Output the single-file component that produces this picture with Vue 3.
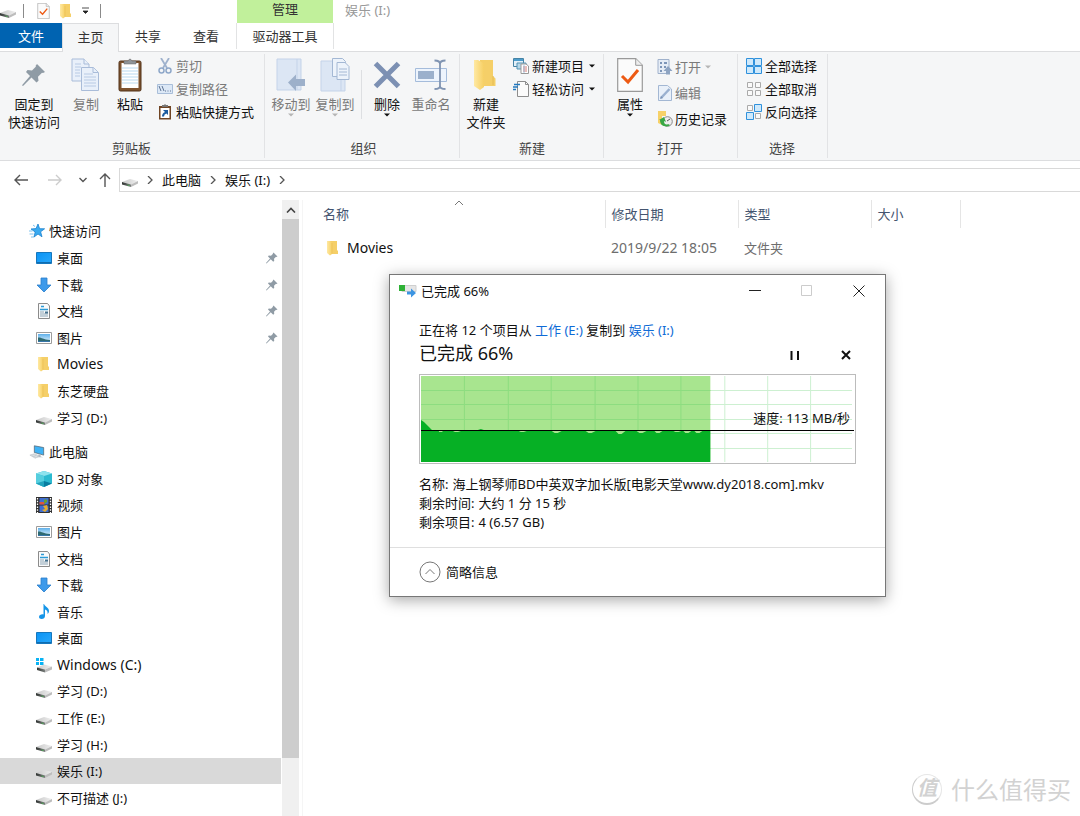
<script setup>
const quickAccess = [
  { icon: 'star', label: '快速访问', root: true },
  { icon: 'desktop', label: '桌面', pinned: true },
  { icon: 'download', label: '下载', pinned: true },
  { icon: 'document', label: '文档', pinned: true },
  { icon: 'picture', label: '图片', pinned: true },
  { icon: 'folder', label: 'Movies', latin: true },
  { icon: 'folder', label: '东芝硬盘' },
  { icon: 'drive', label: '学习 (D:)' }
]

const thisPc = [
  { icon: 'pc', label: '此电脑', root: true },
  { icon: 'cube', label: '3D 对象' },
  { icon: 'video', label: '视频' },
  { icon: 'picture', label: '图片' },
  { icon: 'document', label: '文档' },
  { icon: 'download', label: '下载' },
  { icon: 'music', label: '音乐' },
  { icon: 'desktop', label: '桌面' },
  { icon: 'windrive', label: 'Windows (C:)', latin: true },
  { icon: 'drive', label: '学习 (D:)' },
  { icon: 'drive', label: '工作 (E:)' },
  { icon: 'drive', label: '学习 (H:)' },
  { icon: 'drive', label: '娱乐 (I:)', selected: true },
  { icon: 'drive', label: '不可描述 (J:)' }
]

const sections = [
  { id: 'quick', items: quickAccess },
  { id: 'pc', items: thisPc }
]

const gridX = [43, 87, 130, 174, 217, 260, 304, 347, 390]
const gridY = [15, 29, 44, 58, 73]
const progress = 290

// Short drops in transfer speed: centre, half width and depth
const dips = [
  [20, 2, 1], [36, 4, 1], [102, 4, 1], [136, 5, 2], [170, 5, 2], [200, 5, 3], [221, 5, 2],
  [238, 4, 2], [257, 4, 1], [267, 4, 2], [278, 4, 2]
]
</script>

<template>
  <svg class="sprite" aria-hidden="true">
    <defs>
      <linearGradient id="gFolder" x1="0" x2="1"><stop offset="0" stop-color="#ffe9a3" /><stop offset="1" stop-color="#f6cf63" /></linearGradient>
      <linearGradient id="gDrive" x1="0" x2="1"><stop offset="0" stop-color="#c9c9c9" /><stop offset="1" stop-color="#efefef" /></linearGradient>
      <linearGradient id="gFront" x1="0" x2="1"><stop offset="0" stop-color="#303432" /><stop offset="1" stop-color="#7c807e" /></linearGradient>
      <linearGradient id="gSky" x1="0" y1="0" x2="0" y2="1"><stop offset="0" stop-color="#5fb0ea" /><stop offset="1" stop-color="#e6f5fc" /></linearGradient>
      <linearGradient id="gScreen" x1="0" y1="0" x2="1" y2="1"><stop offset="0" stop-color="#0a93f5" /><stop offset="1" stop-color="#2aa9fb" /></linearGradient>
    </defs>
    <symbol id="drive" viewBox="0 0 16 16">
      <path d="M0 10 8 7l8 2-7 3.500z" fill="url(#gDrive)" />
      <path d="M0 10 9 12.500V15L0 12.400z" fill="url(#gFront)" />
      <path d="M9 12.500 16 9v2.500L9 15z" fill="#bdbdbd" />
      <path d="M5.500 12.500 7.500 13v1l-2-.5z" fill="#4fae57" />
    </symbol>
    <symbol id="windrive" viewBox="0 0 16 16">
      <path d="M1 10.500 8 7.500l8 2-7 3z" fill="url(#gDrive)" />
      <path d="M1 10.500 9 12.500V15.500L1 13z" fill="url(#gFront)" />
      <path d="M9 12.500 16 9.500v3L9 15.500z" fill="#bdbdbd" />
      <path d="M0 1h3v3H0zM4 1h3.500v3H4zM0 5h3v3H0zM4 5h3.500v3H4z" fill="#08b3f4" />
    </symbol>
    <symbol id="folder" viewBox="0 0 16 16">
      <path d="M5 1h7v9l1 1v3H5z" fill="#f5cf68" />
      <path d="M2 1h3l2 1.500V14l-2 1.500L2 13z" fill="url(#gFolder)" />
      <path d="M7 3v10.500" stroke="#e7bd53" stroke-width=".6" />
    </symbol>
    <symbol id="bigfolder" viewBox="0 0 32 32">
      <path d="M10 1h13v16l2.500 2.500V27H10z" fill="#f5cf68" />
      <path d="M4 1h4l6 3.500V28l-4 3-6-4z" fill="url(#gFolder)" />
      <path d="M23 17v9" stroke="#dfb750" stroke-width=".8" />
    </symbol>
    <symbol id="pin" viewBox="0 0 24 24">
      <path d="M15 1 23 9l-2 1-1-.3-4 4 .5 4-2 1.800-5-5L1 23l-1-.8L8 13 4 9l1.500-2 4.500.6 4-4L13.500 3z" fill="#8f9ba5" />
    </symbol>
    <symbol id="star" viewBox="0 0 16 16">
      <path d="m9 1 1.600 4.700 5 .1-4 3 1.400 5L9 11l-4 3 1.200-5L2 6l5-.4z" fill="#39aaf0" stroke="#1b82cf" stroke-width=".8" />
      <path d="M0 8h3.500M.5 11h4M2 14h3M4 2l2 1.500" stroke="#7fc2ee" stroke-width="1" />
    </symbol>
    <symbol id="desktop" viewBox="0 0 16 16">
      <path d="M.5 2.500h15v11H.5z" fill="url(#gScreen)" stroke="#1677bd" />
      <path d="M1 12.500h14" stroke="#0f6cb0" />
    </symbol>
    <symbol id="download" viewBox="0 0 16 16">
      <path d="M5 1h6v7h4l-7 7-7-7h4z" fill="#3e9aea" stroke="#2a7ecb" stroke-width=".8" />
    </symbol>
    <symbol id="document" viewBox="0 0 16 16">
      <path d="M2.500.5h9l2 2.500v12.500h-11z" fill="#fafafa" stroke="#8b8b8b" />
      <path d="M5 3.500h3M4 6.500h8" stroke="#2b9ad7" stroke-width="1.400" /><path d="M4 9h4M4 11h8M4 13h8" stroke="#8ba4b5" />
      <path d="M9 8.500h3v2H9z" fill="#44718f" />
    </symbol>
    <symbol id="picture" viewBox="0 0 16 16">
      <path d="M.5 2.500h15v11H.5z" fill="#fff" stroke="#9c9c9c" />
      <path d="M2 4h12v8H2z" fill="url(#gSky)" /><path d="M2 7.500c3-.5 5 2 12 2.500v2H2z" fill="#2f6a72" /><path d="M2 11h12v1H2z" fill="#3776a9" />
    </symbol>
    <symbol id="pc" viewBox="0 0 18 16">
      <path d="m6 1 10.500 2v8.500L6 8.500z" fill="#3fb2f5" stroke="#54616c" stroke-width=".8" />
      <path d="m11 10.500 2 .5v2l3 1H9z" fill="#aeb7be" />
      <path d="M1 11.500 6 10l6 2.500-5 2.500z" fill="#e4e8eb" stroke="#b0b7bc" stroke-width=".6" />
      <path d="m3 12 5 2M5 11l5 2" stroke="#a2abb2" stroke-width=".5" />
    </symbol>
    <symbol id="cube" viewBox="0 0 16 16">
      <path d="m8 0 8 2.500v10L8 16 0 12.500v-10z" fill="#2cbad0" /><path d="m8 0 8 2.500L8 5 0 2.500z" fill="#8ee3ee" />
      <path d="M0 2.500 8 5v11l-8-3.500z" fill="#56cede" /><path d="m8 10 8 2.500L8 16z" fill="#087da0" /><path d="M0 12.500 8 10v6z" fill="#20a3bd" />
    </symbol>
    <symbol id="video" viewBox="0 0 16 16">
      <path d="M0 0h16v16H0z" fill="#303030" /><path d="M3.500 1h9v6.500h-9zM3.500 8.500h9V15h-9z" fill="#416fd1" />
      <path d="M3.500 5h5v2.500h-5z" fill="#df563a" /><path d="M8 3c2-2 4 0 3 2l-3 2z" fill="#6c9e2d" /><path d="m7 9 4-1 1 4-3 3-3-2 3-1z" fill="#e5ab2c" />
      <path d="M1.500 1v15M14.500 1v15" stroke="#fff" stroke-width="1.300" stroke-dasharray="1.500 1.300" />
    </symbol>
    <symbol id="music" viewBox="0 0 16 16">
      <path d="M8 0c1 3 5 3.500 5 7 0 2-1 2.500-1.500 3 .5-3-1-4-2.500-4.500V12c0 2-1.500 3-3.300 3C4 15 3 14.200 3 13c0-2 2.500-3 4.500-2.500V0z" fill="#1595e8" />
    </symbol>
    <symbol id="properties" viewBox="0 0 26 34">
      <path d="M.7.7h18l6.600 6.600v26H.7z" fill="#fbfbfb" stroke="#999" stroke-width="1.200" /><path d="M18.700.7v6.600h6.600" fill="#eee" stroke="#999" />
      <path d="m5 18 6 6 10-12" fill="none" stroke="#ed5a14" stroke-width="3" />
    </symbol>
    <symbol id="copy" viewBox="0 0 30 34">
      <g fill="#e9f0fa" stroke="#a9bcd9"><path d="M1 1h12l5 5v17H1z" /><path d="M13 1v5h5" /><path d="M10.500 9.500h12l5 5v18h-17z" /><path d="M22 9.500v5h5" /></g>
      <path d="M4 6h6M4 9h6M4 12h5M4 15h5M4 18h5M13 16h9M13 19h12M13 22h12M13 25h12M13 28h12" stroke="#b8cae4" />
    </symbol>
    <symbol id="paste" viewBox="0 0 24 34">
      <rect x="1" y="3" width="22" height="30" rx="1.500" fill="#7d532f" stroke="#523219" />
      <path d="M3.500 5h17v25h-17z" fill="#fff" /><path d="M4 10h16M4 13h16M4 16h16M4 19h16M4 22h16M4 25h16" stroke="#b9d9ef" />
      <path d="M6 3h4q2-4 4 0h4v3H6z" fill="#8f9498" stroke="#666" stroke-width=".5" />
    </symbol>
    <symbol id="cut" viewBox="0 0 16 16">
      <path d="m4 0 6 10M12 0 6 10" stroke="#9fb2cd" stroke-width="1.800" />
      <g fill="none" stroke="#8ea7c9" stroke-width="1.500"><ellipse cx="4.500" cy="12.500" rx="2.500" ry="2.500" /><ellipse cx="11.500" cy="12.500" rx="2.500" ry="2.500" /></g>
    </symbol>
    <symbol id="path" viewBox="0 0 16 16">
      <path d="M.5 3.500h15v9H.5z" fill="#dce8f6" stroke="#a9bed9" /><path d="m2 5 2 5M5 5l2 5" stroke="#5d7394" /><path d="M8 10h1M10.500 10h1M13 10h1" stroke="#5d7394" />
    </symbol>
    <symbol id="shortcut" viewBox="0 0 16 16">
      <path d="M2 2h12v13.500H2z" fill="#704524" /><path d="M3.500 4h9v10h-9z" fill="#fff" /><path d="M5 1h2l1-1 1 1h2v2H5z" fill="#777" />
      <path d="M6 6h5v5L9.500 9.500Q7 10 7 12.500H5Q5 9 8 8z" fill="#1c5b9f" />
    </symbol>
    <symbol id="moveto" viewBox="0 0 30 34">
      <path d="M1 1h24v31H1z" fill="#dce6f4" stroke="#c4d3e9" /><path d="M21 1v31" stroke="#c4d3e9" />
      <path d="m12 24.500 8-8V21h9v7h-9v5z" fill="#9db0ca" />
    </symbol>
    <symbol id="copyto" viewBox="0 0 30 34">
      <path d="M1 3h24v30H1z" fill="#dce6f4" stroke="#c4d3e9" /><path d="M21 3v30" stroke="#c4d3e9" />
      <g fill="#edf3fb" stroke="#a4b8d4"><path d="M12.500.5h10l3 3v15h-13z" /><path d="M17 4.500h8l4 4v13H17z" /></g>
      <path d="M19 11h8M19 14h8M19 17h8" stroke="#a4b8d4" />
    </symbol>
    <symbol id="delete" viewBox="0 0 28 34"><path d="M2.500 5.500 25.500 28.500M25.500 5.500 2.500 28.500" stroke="#7c90b3" stroke-width="5" /></symbol>
    <symbol id="rename" viewBox="0 0 32 34">
      <path d="M.5 10.500h31v13H.5z" fill="#edf4fd" stroke="#a5bcdb" /><path d="M3 13h16v8H3z" fill="#9bb0cc" />
      <path d="M19.500 2.500q5.500 0 5.500 3.500v22q0 3-5.500 3M30.500 2.500Q25 2.500 25 6M30.500 31Q25 31 25 28" fill="none" stroke="#8094b2" stroke-width="1.800" />
    </symbol>
    <symbol id="newitem" viewBox="0 0 16 16">
      <path d="M.5.500h10v8H.5z" fill="#e4f0f8" stroke="#4583a5" /><path d="M1 1h9v2H1z" fill="#4d9ccb" /><path d="M4 5h9v6H4z" fill="#b8d8e9" stroke="#5593b4" />
      <path d="M8 6h5l2.500 2v7.500H8z" fill="#fff" stroke="#999" /><path d="M10 9h4M10 11h4M10 13h4" stroke="#d77b74" /><path d="M11 7v8" stroke="#7bb2dc" stroke-width=".7" />
    </symbol>
    <symbol id="easy" viewBox="0 0 16 16">
      <path d="M4.500.5h8l3 3v12h-11z" fill="#fbfbfb" stroke="#8d8d8d" /><path d="M12.500.5v3h3" fill="none" stroke="#8d8d8d" />
      <path d="M1 3.500h6M0 6h5M0 8.500h3" stroke="#2379bf" stroke-width="1.400" />
    </symbol>
    <symbol id="open" viewBox="0 0 16 16">
      <path d="M1 .5h11v14H1z" fill="#e6edf6" stroke="#a0b2cc" /><path d="M3 3h2v2H3zM3 7h2v2H3zM3 11h2v2H3zM7 3h3v2H7zM7 7h2v2H7z" fill="#7e96b8" />
      <path d="m11 7 4.500 5H13v3.500H9V12H6.500z" fill="#8ea4c2" />
    </symbol>
    <symbol id="edit" viewBox="0 0 16 16">
      <path d="M1.500.5h9l4 3.500v11.500h-13z" fill="#e9f0f9" stroke="#a3b7d3" /><path d="M4 13 12.500 4" stroke="#9bb1d0" stroke-width="2.500" /><path d="m3 14 1-3 2 2z" fill="#7d94b5" />
    </symbol>
    <symbol id="history" viewBox="0 0 16 16">
      <path d="M1 0h8v5H5v9l-4-2z" fill="#f6d168" /><circle cx="10.500" cy="10.500" r="4.800" fill="#eee" stroke="#888" />
      <path d="M3 9c0 8 9 7 10 5l-2-1c-1 1-4 1-4-3l2 1-2-5-5 3z" fill="#38a745" /><path d="m10 10 3-2" stroke="#555" />
    </symbol>
    <symbol id="selectall" viewBox="0 0 16 16">
      <path d="M.5.5h7v7h-7zM8.500.5h7v7h-7zM.5 8.500h7v7h-7zM8.500 8.500h7v7h-7z" fill="#cfe9fb" stroke="#2f91dc" />
    </symbol>
    <symbol id="selectnone" viewBox="0 0 16 16">
      <path d="M1.500 1.500h5v5h-5zM9.500 1.500h5v5h-5zM1.500 9.500h5v5h-5zM9.500 9.500h5v5h-5z" fill="#fafafa" stroke="#aaa" />
    </symbol>
    <symbol id="invert" viewBox="0 0 16 16">
      <path d="M1.500 1.500h5v5h-5zM9.500 9.500h5v5h-5z" fill="#fafafa" stroke="#aaa" /><path d="M8.500.5h7v7h-7zM.5 8.500h7v7h-7z" fill="#cfe9fb" stroke="#2f91dc" />
    </symbol>
    <symbol id="copying" viewBox="0 0 18 14">
      <path d="M3 1.500h14v6H3z" fill="#e5e5e5" stroke="#cfcfcf" /><path d="M0 1h6v6H0z" fill="#2eb135" /><path d="M8 7.500h4V4.500L17 9l-5 4.500v-3H8z" fill="#3d95e2" />
    </symbol>
    <symbol id="caret" viewBox="0 0 6 4"><path d="M0 .5h6L3 3.500z" fill="currentColor" /></symbol>
    <symbol id="chevron" viewBox="0 0 8 8"><path d="m2 0 4 4-4 4" fill="none" stroke="currentColor" stroke-width="1.300" /></symbol>
  </svg>

  <div class="window">
    <header class="titlebar">
      <div class="quickbar">
        <svg class="i16"><use href="#drive" /></svg>
        <span class="bar"></span>
        <button class="plain q1" aria-label="属性"><svg class="qprop"><use href="#properties" /></svg></button>
        <button class="plain q2" aria-label="新建文件夹"><svg class="i16"><use href="#folder" /></svg></button>
        <button class="plain q3" aria-label="自定义快速访问工具栏"><svg class="qmore" viewBox="0 0 8 8"><path d="M0 1h7M1 4h5L3.500 6.500z" stroke="#222" fill="#222" stroke-width=".8" /></svg></button>
        <span class="bar"></span>
      </div>
      <div class="context-head">管理</div>
      <h1 class="window-title">娱乐 (I:)</h1>
    </header>

    <nav class="tabs">
      <button class="tab file">文件</button>
      <button class="tab active">主页</button>
      <button class="tab">共享</button>
      <button class="tab">查看</button>
      <button class="tab context">驱动器工具</button>
    </nav>

    <div class="ribbon">
      <section class="group roomy">
        <div class="tools">
          <button class="big wide"><svg class="pin-big"><use href="#pin" /></svg><span>固定到<br />快速访问</span></button>
          <button class="big dim"><svg class="ico"><use href="#copy" /></svg><span>复制</span></button>
          <button class="big"><svg class="ico"><use href="#paste" /></svg><span>粘贴</span></button>
          <div class="stack">
            <button class="small dim"><svg class="i16"><use href="#cut" /></svg>剪切</button>
            <button class="small dim"><svg class="i16"><use href="#path" /></svg>复制路径</button>
            <button class="small"><svg class="i16"><use href="#shortcut" /></svg>粘贴快捷方式</button>
          </div>
        </div>
        <h2>剪贴板</h2>
      </section>
      <section class="group tight">
        <div class="tools">
          <button class="big dim"><svg class="ico"><use href="#moveto" /></svg><span>移动到</span><svg class="caret"><use href="#caret" /></svg></button>
          <button class="big dim"><svg class="ico"><use href="#copyto" /></svg><span>复制到</span><svg class="caret"><use href="#caret" /></svg></button>
          <span class="rule"></span>
          <button class="big"><svg class="ico"><use href="#delete" /></svg><span>删除</span><svg class="caret"><use href="#caret" /></svg></button>
          <button class="big dim"><svg class="ico"><use href="#rename" /></svg><span>重命名</span></button>
        </div>
        <h2>组织</h2>
      </section>
      <section class="group">
        <div class="tools">
          <button class="big"><svg class="ico"><use href="#bigfolder" /></svg><span>新建<br />文件夹</span></button>
          <div class="stack">
            <button class="small"><svg class="i16"><use href="#newitem" /></svg>新建项目<svg class="caret"><use href="#caret" /></svg></button>
            <button class="small"><svg class="i16"><use href="#easy" /></svg>轻松访问<svg class="caret"><use href="#caret" /></svg></button>
          </div>
        </div>
        <h2>新建</h2>
      </section>
      <section class="group roomy">
        <div class="tools">
          <button class="big"><svg class="ico"><use href="#properties" /></svg><span>属性</span><svg class="caret"><use href="#caret" /></svg></button>
          <div class="stack loose">
            <button class="small dim"><svg class="i16"><use href="#open" /></svg>打开<svg class="caret"><use href="#caret" /></svg></button>
            <button class="small dim"><svg class="i16"><use href="#edit" /></svg>编辑</button>
            <button class="small"><svg class="i16"><use href="#history" /></svg>历史记录</button>
          </div>
        </div>
        <h2>打开</h2>
      </section>
      <section class="group roomy">
        <div class="tools">
          <div class="stack">
            <button class="small"><svg class="i16"><use href="#selectall" /></svg>全部选择</button>
            <button class="small"><svg class="i16"><use href="#selectnone" /></svg>全部取消</button>
            <button class="small"><svg class="i16"><use href="#invert" /></svg>反向选择</button>
          </div>
        </div>
        <h2>选择</h2>
      </section>
    </div>

    <div class="address-row">
      <div class="nav-buttons">
        <button class="plain" aria-label="后退"><svg class="arrow" viewBox="0 0 14 12"><path d="M14 6H1M6 1 1 6l5 5" /></svg></button>
        <button class="plain faint" aria-label="前进"><svg class="arrow" viewBox="0 0 14 12"><path d="M0 6h13M8 1l5 5-5 5" /></svg></button>
        <button class="plain narrow" aria-label="最近浏览的位置"><svg class="recent" viewBox="0 0 8 6"><path d="m.5 1 3.500 3.500L7.500 1" /></svg></button>
        <button class="plain narrow" aria-label="上移"><svg class="up" viewBox="0 0 12 14"><path d="M6 14V1M1 6l5-5 5 5" /></svg></button>
      </div>
      <nav class="crumbs" aria-label="地址">
        <svg class="i16"><use href="#drive" /></svg>
        <svg class="chev"><use href="#chevron" /></svg>
        <a href="#">此电脑</a>
        <svg class="chev"><use href="#chevron" /></svg>
        <a href="#">娱乐 (I:)</a>
        <svg class="chev"><use href="#chevron" /></svg>
      </nav>
    </div>

    <main class="body">
      <nav class="tree" aria-label="导航窗格">
        <ul v-for="s in sections" :key="s.id" :class="s.id">
          <li v-for="(item, n) in s.items" :key="n">
            <a href="#" :class="{ root: item.root, selected: item.selected, latin: item.latin }">
              <svg class="i16"><use :href="'#' + item.icon" /></svg>
              <span>{{ item.label }}</span>
              <svg v-if="item.pinned" class="pin-small"><use href="#pin" /></svg>
            </a>
          </li>
        </ul>
      </nav>
      <div class="scrollbar">
        <button class="plain scroll-up" aria-label="向上滚动"><svg viewBox="0 0 10 6"><path d="m1 5.500 4-4 4 4" /></svg></button>
        <div class="thumb"></div>
      </div>
      <section class="files">
        <table>
          <colgroup><col class="c-name" /><col class="c-col" /><col class="c-col" /><col class="c-size" /><col /></colgroup>
          <thead>
            <tr>
              <th class="first">名称<svg class="sort" viewBox="0 0 10 6"><path d="m1 5 4-4 4 4" /></svg></th>
              <th>修改日期</th>
              <th>类型</th>
              <th>大小</th>
              <th class="rest"></th>
            </tr>
          </thead>
          <tbody>
            <tr>
              <td class="first"><div class="entry"><svg class="i16"><use href="#folder" /></svg>Movies</div></td>
              <td class="latin">2019/9/22 18:05</td>
              <td>文件夹</td>
              <td></td>
              <td></td>
            </tr>
          </tbody>
        </table>
      </section>
    </main>

    <section class="dialog" role="dialog" aria-label="已完成 66%">
      <header class="dialog-bar">
        <svg class="copying"><use href="#copying" /></svg>
        <span class="dialog-title">已完成 66%</span>
        <button class="plain" aria-label="最小化"><svg viewBox="0 0 12 12"><path d="M0 5.500h12" /></svg></button>
        <button class="plain off" aria-label="最大化"><svg viewBox="0 0 12 12"><path d="M.5.5h10v10H.5z" /></svg></button>
        <button class="plain" aria-label="关闭"><svg viewBox="0 0 12 12"><path d="m.5.5 11 11M11.500.5.5 11.500" /></svg></button>
      </header>
      <div class="dialog-body">
        <p class="from">正在将 12 个项目从 <a href="#">工作 (E:)</a> 复制到 <a href="#">娱乐 (I:)</a></p>
        <div class="status">
          <h2>已完成 66%</h2>
          <button class="plain" aria-label="暂停"><svg viewBox="0 0 10 10"><path d="M1.500 1v9M8 1v9" stroke-width="2" /></svg></button>
          <button class="plain" aria-label="取消"><svg viewBox="0 0 10 10"><path d="m1 1 8 8M9 1 1 9" stroke-width="2" /></svg></button>
        </div>
        <div class="chart">
          <svg viewBox="0 0 434 86" preserveAspectRatio="none">
            <path v-for="x in gridX" :key="'x' + x" :d="`M${x + 0.5} 0V86`" stroke="#cdf0d1" />
            <path v-for="y in gridY" :key="'y' + y" :d="`M0 ${y - 0.5}H432`" stroke="#cdf0d1" />
            <rect :width="progress" height="86" fill="#a8e58f" />
            <path v-for="x in gridX.filter((v) => v < progress)" :key="'p' + x" :d="`M${x + 0.5} 0V86`" stroke="#8ddd80" />
            <path v-for="y in gridY" :key="'q' + y" :d="`M0 ${y - 0.5}H${progress}`" stroke="#8ddd80" />
            <path :d="`M0 44 3 46 11 54H57l3-1 3 1H${progress}V86H0z`" fill="#06b025" />
            <path v-for="[c, w, d] in dips" :key="'d' + c" :d="`M${c - w} 55H${c + w}L${c + 1} ${55 + d}H${c - 2}z`" fill="#a8e58f" />
            <path d="M0 54.500H434" stroke="#000" />
          </svg>
          <span class="speed">速度: 113 MB/秒</span>
        </div>
        <dl>
          <div><dt>名称:</dt> <dd>海上钢琴师BD中英双字加长版[电影天堂www.dy2018.com].mkv</dd></div>
          <div><dt>剩余时间:</dt> <dd>大约 1 分 15 秒</dd></div>
          <div><dt>剩余项目:</dt> <dd>4 (6.57 GB)</dd></div>
        </dl>
      </div>
      <footer>
        <button class="fewer">
          <svg viewBox="0 0 22 22"><circle cx="11" cy="11" r="10" /><path d="m6.500 13 4.500-4.500 4.500 4.500" /></svg>
          简略信息
        </button>
      </footer>
    </section>

    <div class="watermark">
      <span class="seal">值</span>
      <span>什么值得买</span>
    </div>
  </div>
</template>

<style>
html, body, #app { height: 100%; }
body { overflow: hidden; background: #fff; }
</style>

<style scoped>
.sprite { position: absolute; width: 0; height: 0; }
.window {
  position: relative;
  display: flex;
  flex-direction: column;
  min-height: 100vh;
  overflow: hidden;
  background: #fff;
  color: #111;
  font: 13px/18px "Noto Sans", "Noto Sans CJK SC", sans-serif;
}
button { font: inherit; color: inherit; border: 0; padding: 0; background: none; }
a { color: inherit; text-decoration: none; }
h1, h2, p, dl, dd, ul { margin: 0; padding: 0; font-weight: 400; font-size: 13px; list-style: none; }
svg { display: block; flex: none; }
.plain { display: flex; align-items: center; justify-content: center; }
.i16 { width: 16px; height: 16px; }

.titlebar { display: flex; height: 23px; }
.quickbar { display: flex; align-items: center; width: 237px; padding-bottom: 2px; box-sizing: border-box; }
.bar { width: 1px; height: 14px; background: #8a8a8a; }
.quickbar > .i16 + .bar { margin-left: 7px; }
.q1 { margin-left: 13px; }
.qprop { width: 13px; height: 16px; }
.q2 { margin-left: 8px; }
.q3 { margin: 0 10px 0 8px; }
.qmore { width: 8px; height: 8px; }
.context-head { width: 96px; background: #c1f09b; text-align: center; line-height: 19px; color: #333; }
.window-title { margin-left: 12px; line-height: 21px; color: #999; }

.tabs { display: flex; height: 29px; box-shadow: inset 0 -1px #dcdddf; }
.tab { width: 58px; height: 26px; color: #333; }
.tab.file { width: 62px; height: 25px; background: #0063b1; color: #fff; }
.tab.active { width: 57px; height: 29px; padding-bottom: 3px; background: #f5f6f7; border: 1px solid #dcdddf; border-bottom: 0; }
.tab.context { width: 98px; margin-left: 1px; border: 1px solid #e2e3e4; border-top: 0; border-bottom: 0; }

.ribbon { display: flex; background: #f5f6f7; border-bottom: 1px solid #dcdddf; }
.group { display: flex; flex-direction: column; justify-content: space-between; height: 104px; margin: 2px 0; padding: 0 8px 1px 4px; border-right: 1px solid #e2e3e5; box-sizing: border-box; }
.group.roomy { padding-right: 10px; }
.group.tight { padding-right: 6px; }
.group h2 { text-align: center; line-height: 18px; color: #444; padding-left: 5px; }
.tools { display: flex; }
.big { display: flex; flex-direction: column; align-items: center; width: 44px; padding-top: 4px; white-space: nowrap; }
.big.wide { width: 60px; }
.big .ico { width: 32px; height: 34px; }
.big span { padding-top: 3px; }
.pin-big { width: 24px; height: 24px; margin: 5px 0; }
.caret { width: 6px; height: 4px; }
.dim { color: #7a7a7a; }
.dim .caret { color: #b5b5b5; }
.rule { width: 1px; height: 49px; margin: 16px 3px 0 4px; background: #dddfe2; }
.stack { display: flex; flex-direction: column; margin-left: 5px; }
.stack:first-child { margin-left: 4px; }
.small { display: flex; align-items: center; gap: 3px; height: 23px; }
.loose .small { height: 26px; gap: 2px; }
.small .caret { margin-left: 2px; }

.address-row { display: flex; align-items: center; height: 39px; box-sizing: border-box; padding-bottom: 2px; }
.nav-buttons { display: flex; width: 119px; padding-left: 4px; box-sizing: border-box; fill: none; stroke: #555; }
.nav-buttons .plain { width: 34px; height: 24px; }
.nav-buttons .narrow { width: 22px; }
.nav-buttons svg { stroke: inherit; stroke-width: 1.4; fill: none; }
.nav-buttons .faint { stroke: #ccc; }
.arrow { width: 14px; height: 12px; }
.recent { width: 8px; height: 6px; }
.up { width: 12px; height: 14px; }
.crumbs { display: flex; flex: 1; align-items: center; height: 24px; border: 1px solid #d9d9d9; border-right: 0; padding-left: 2px; box-sizing: border-box; }
.chev { width: 8px; height: 8px; margin: 0 8px; color: #555; }

.body { display: flex; flex: 1; }
.tree { width: 281px; padding-top: 18px; }
.tree ul { display: grid; grid-auto-rows: 1fr; }
.tree .quick { height: 213px; margin-bottom: 8px; }
.tree .pc { height: 372px; }
.tree a { display: flex; align-items: center; height: 100%; padding: 0 3px 0 36px; gap: 5px; }
.tree .root { padding-left: 29px; gap: 4px; }
.tree span { flex: 1; }
.tree .selected { background: #d9d9d9; }
.latin { font-size: 14px; }
.pin-small { width: 12px; height: 12px; }
.scrollbar { display: flex; flex-direction: column; width: 17px; margin-left: 1px; background: #f0f0f0; }
.scroll-up { height: 19px; }
.scroll-up svg { width: 10px; height: 6px; fill: none; stroke: #444; stroke-width: 1.6; }
.thumb { height: 539px; background: #cdcdcd; }

.files { flex: 1; margin-left: 3px; border-left: 1px solid #f5f5f5; }
table { width: 100%; table-layout: fixed; border-collapse: collapse; }
.c-name { width: 302px; }
.c-col { width: 133px; }
.c-size { width: 89px; }
th { position: relative; height: 28px; padding: 0 0 0 6px; text-align: left; font-weight: 400; color: #44546f; border-right: 1px solid #e5e5e5; }
th.first { padding-left: 20px; }
th.rest { border: 0; }
.sort { position: absolute; top: 0; left: 50%; width: 10px; height: 6px; fill: none; stroke: #777; }
td { height: 40px; padding: 0 0 0 6px; color: #6d6d6d; white-space: nowrap; }
td.first { padding-left: 22px; color: #111; font-size: 14px; }
.entry { display: flex; align-items: center; gap: 6px; }

.dialog {
  position: absolute;
  left: 389px;
  top: 274px;
  width: 497px;
  box-sizing: border-box;
  background: #fff;
  border: 1px solid #777;
  box-shadow: 0 3px 14px rgba(0, 0, 0, 0.35);
}
.dialog-bar { display: flex; align-items: center; height: 32px; padding-left: 9px; }
.copying { width: 18px; height: 14px; }
.dialog-title { flex: 1; margin-left: 4px; }
.dialog-bar .plain { width: 52px; height: 32px; }
.dialog-bar .plain svg { width: 12px; height: 12px; fill: none; stroke: #222; }
.dialog-bar .off svg { stroke: #ccc; }
.dialog-body { padding: 13px 29px 15px; }
.from { line-height: 20px; }
.from a { color: #0f6bd6; }
.status { display: flex; align-items: center; padding-bottom: 8px; }
.status h2 { flex: 1; font-size: 18px; line-height: 26px; }
.status .plain { width: 20px; height: 20px; margin: 4px 0 0 31px; }
.status svg { width: 10px; height: 10px; stroke: #111; fill: none; }
.chart { position: relative; border: 1px solid #bcbcbc; padding: 1px; }
.chart svg { width: 100%; height: 86px; }
.speed { position: absolute; right: 5px; top: 34px; }
dl { padding-top: 11px; }
dl div { display: flex; gap: 4px; line-height: 19px; white-space: nowrap; }
footer { border-top: 1px solid #dfdfdf; padding: 13px 29px; }
.fewer { display: flex; align-items: center; gap: 5px; }
.fewer svg { width: 22px; height: 22px; fill: none; stroke: #777; }

.watermark { position: absolute; right: 9px; bottom: 11px; display: flex; align-items: center; gap: 9px; color: #d2d2d2; font-size: 24px; line-height: 30px; }
.seal { width: 28px; height: 28px; border-radius: 50%; border: 1px solid #e6e6e6; border-left-color: #ccc; border-bottom: 2px solid #ccc; font-size: 20px; line-height: 26px; font-weight: 700; font-style: italic; text-align: center; }
</style>
